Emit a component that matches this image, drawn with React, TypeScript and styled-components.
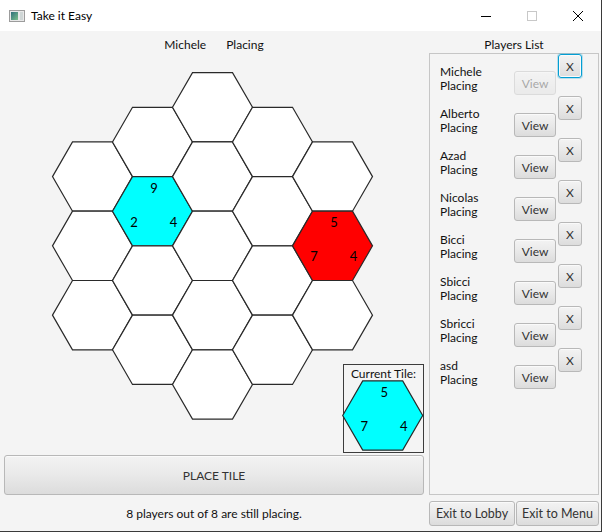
import styled, { createGlobalStyle } from "styled-components";

const GlobalStyle = createGlobalStyle`
  html, body {
    margin: 0;
    padding: 0;
  }
  body {
    width: 602px;
    height: 532px;
    overflow: hidden;
    background: #f4f4f4;
    font-family: "Segoe UI", Lato, "Noto Sans", sans-serif;
    font-size: 12px;
    color: #111;
  }
`;

const Window = styled.div`
  width: 602px;
  height: 532px;
  box-sizing: border-box;
  display: flex;
  flex-direction: column;
  background: #f4f4f4;
  border-right: 1px solid #3a3a3a;
  border-bottom: 1px solid #3a3a3a;
`;

const TitleBar = styled.div`
  height: 31px;
  flex: none;
  display: flex;
  align-items: center;
  background: #fff;
`;

const AppIcon = styled.svg`
  margin-left: 9px;
`;

const WindowTitle = styled.span`
  margin-left: 6px;
  font-size: 12px;
  color: #000;
  flex: 1;
`;

const Controls = styled.div`
  display: flex;
  height: 100%;
`;

const ControlButton = styled.div`
  width: 46px;
  height: 100%;
  display: flex;
  align-items: center;
  justify-content: center;
`;

const Content = styled.div`
  flex: 1;
  display: grid;
  grid-template-columns: 420px 170px;
  column-gap: 5px;
  padding: 0 2px 0 4px;
`;

const Column = styled.div`
  display: flex;
  flex-direction: column;
`;

const Header = styled.div`
  height: 22px;
  display: flex;
  align-items: flex-end;
  justify-content: center;
  gap: 20px;
  line-height: 16px;
`;

const BoardArea = styled.div`
  height: 400px;
  display: grid;
`;

const BoardSvg = styled.svg`
  grid-area: 1 / 1;
`;

const CurrentTile = styled.div`
  grid-area: 1 / 1;
  justify-self: end;
  align-self: end;
  width: 81px;
  height: 89px;
  box-sizing: border-box;
  border: 1px solid #3c3c3c;
  padding-top: 1px;
  display: flex;
  flex-direction: column;
  align-items: center;
`;

const TileLabel = styled.div`
  line-height: 15px;
  height: 15px;
`;

const TileSvg = styled.svg`
  overflow: visible;
  align-self: flex-start;
`;

const Button = styled.button<{ $focused?: boolean }>`
  box-sizing: border-box;
  font-family: inherit;
  font-size: 12px;
  color: #333;
  padding: 0;
  border: 1px solid ${(p) => (p.$focused ? "#039ed3" : "#b8b8b8")};
  border-radius: 3px;
  background: linear-gradient(to bottom, #f3f3f3 0%, #e9e9e9 50%, #dcdcdc 100%);
  box-shadow: ${(p) =>
    p.$focused
      ? "inset 0 0 0 1px #fafafa, 0 0 0 1px rgba(3, 158, 211, 0.25)"
      : "inset 0 1px 0 #fafafa"};
  &:disabled {
    opacity: 0.4;
  }
`;

const PlaceButton = styled(Button)`
  margin-top: 2px;
  height: 40px;
  width: 100%;
`;

const Status = styled.div`
  flex: 1;
  display: flex;
  align-items: center;
  justify-content: center;
  padding-top: 1px;
`;

const Panel = styled.div`
  height: 442px;
  box-sizing: border-box;
  border: 1px solid #c6c6c6;
  display: flex;
  flex-direction: column;
`;

const PlayerRow = styled.div`
  height: 42px;
  display: grid;
  grid-template-columns: 72px 42px 24px;
  column-gap: 2px;
  padding-left: 10px;
  align-items: start;
`;

const PlayerInfo = styled.div`
  margin-top: 11px;
  display: flex;
  flex-direction: column;
`;

const InfoLine = styled.span`
  height: 14px;
  line-height: 14px;
`;

const ViewButton = styled(Button)`
  margin-top: 17px;
  height: 24px;
`;

const KickButton = styled(Button)`
  height: 24px;
`;

const ExitRow = styled.div`
  margin-top: 6px;
  display: flex;
  gap: 1px;
`;

const ExitButton = styled(Button)<{ $w: number }>`
  height: 25px;
  width: ${(p) => p.$w}px;
  font-size: 12.5px;
`;

const R = 40;
const H = R * Math.sqrt(3);

function hexPoints(cx: number, cy: number) {
  return [
    [cx - R, cy],
    [cx - R / 2, cy - H / 2],
    [cx + R / 2, cy - H / 2],
    [cx + R, cy],
    [cx + R / 2, cy + H / 2],
    [cx - R / 2, cy + H / 2],
  ]
    .map((p) => p.join(","))
    .join(" ");
}

interface Tile {
  top: number;
  left: number;
  right: number;
  color: string;
}

const placed: Record<string, Tile> = {
  "1-1": { top: 9, left: 2, right: 4, color: "#00ffff" },
  "4-1": { top: 5, left: 7, right: 4, color: "#ff0000" },
};

function Hex({ cx, cy, tile }: { cx: number; cy: number; tile?: Tile }) {
  return (
    <g>
      <polygon
        points={hexPoints(cx, cy)}
        fill={tile ? tile.color : "#fff"}
        stroke="#2a2a2a"
        strokeWidth={1.2}
      />
      {tile && (
        <g fontSize={13} textAnchor="middle" fill="#000">
          <text x={cx + 1.5} y={cy - 18.5}>
            {tile.top}
          </text>
          <text x={cx - 18.5} y={cy + 15.5}>
            {tile.left}
          </text>
          <text x={cx + 21} y={cy + 15.5}>
            {tile.right}
          </text>
        </g>
      )}
    </g>
  );
}

const players = [
  "Michele",
  "Alberto",
  "Azad",
  "Nicolas",
  "Bicci",
  "Sbicci",
  "Sbricci",
  "asd",
];

export default function App() {
  const columns = [3, 4, 5, 4, 3];
  return (
    <>
      <GlobalStyle />
      <Window>
        <TitleBar>
          <AppIcon width="16" height="12" viewBox="0 0 16 12">
            <defs>
              <linearGradient id="ic" x1="0" y1="0" x2="1" y2="1">
                <stop offset="0" stopColor="#2f6f7a" />
                <stop offset="1" stopColor="#7bbf8a" />
              </linearGradient>
            </defs>
            <rect x="0.5" y="0.5" width="15" height="11" fill="#e8e8e8" stroke="#9c9c9c" />
            <rect x="2" y="2" width="7" height="8" fill="url(#ic)" />
            <rect x="11" y="2" width="3" height="8" fill="#cfd6d6" />
          </AppIcon>
          <WindowTitle>Take it Easy</WindowTitle>
          <Controls>
            <ControlButton>
              <svg width="10" height="10" viewBox="0 0 10 10">
                <line x1="0" y1="5.5" x2="10" y2="5.5" stroke="#000" strokeWidth="1" />
              </svg>
            </ControlButton>
            <ControlButton>
              <svg width="10" height="10" viewBox="0 0 10 10">
                <rect x="0.5" y="0.5" width="9" height="9" fill="none" stroke="#c8c8c8" />
              </svg>
            </ControlButton>
            <ControlButton>
              <svg width="10" height="10" viewBox="0 0 10 10">
                <path d="M0 0L10 10M10 0L0 10" stroke="#000" strokeWidth="1" />
              </svg>
            </ControlButton>
          </Controls>
        </TitleBar>
        <Content>
          <Column>
            <Header>
              <span>Michele</span>
              <span>Placing</span>
            </Header>
            <BoardArea>
              <BoardSvg width="420" height="400" viewBox="0 0 420 400">
                {columns.map((count, c) =>
                  Array.from({ length: count }).map((_, i) => (
                    <Hex
                      key={`${c}-${i}`}
                      cx={88.5 + 60 * c}
                      cy={54.3 + (H / 2) * Math.abs(c - 2) + H * i}
                      tile={placed[`${c}-${i}`]}
                    />
                  ))
                )}
              </BoardSvg>
              <CurrentTile>
                <TileLabel>Current Tile:</TileLabel>
                <TileSvg width="79" height="71" viewBox="0 0 79 71">
                  <Hex cx={38.7} cy={34.5} tile={{ top: 5, left: 7, right: 4, color: "#00ffff" }} />
                </TileSvg>
              </CurrentTile>
            </BoardArea>
            <PlaceButton>PLACE TILE</PlaceButton>
            <Status>8 players out of 8 are still placing.</Status>
          </Column>
          <Column>
            <Header>
              <span>Players List</span>
            </Header>
            <Panel>
              {players.map((name, i) => (
                <PlayerRow key={name}>
                  <PlayerInfo>
                    <InfoLine>{name}</InfoLine>
                    <InfoLine>Placing</InfoLine>
                  </PlayerInfo>
                  <ViewButton disabled={i === 0}>View</ViewButton>
                  <KickButton $focused={i === 0}>X</KickButton>
                </PlayerRow>
              ))}
            </Panel>
            <ExitRow>
              <ExitButton $w={86}>Exit to Lobby</ExitButton>
              <ExitButton $w={83}>Exit to Menu</ExitButton>
            </ExitRow>
          </Column>
        </Content>
      </Window>
    </>
  );
}
